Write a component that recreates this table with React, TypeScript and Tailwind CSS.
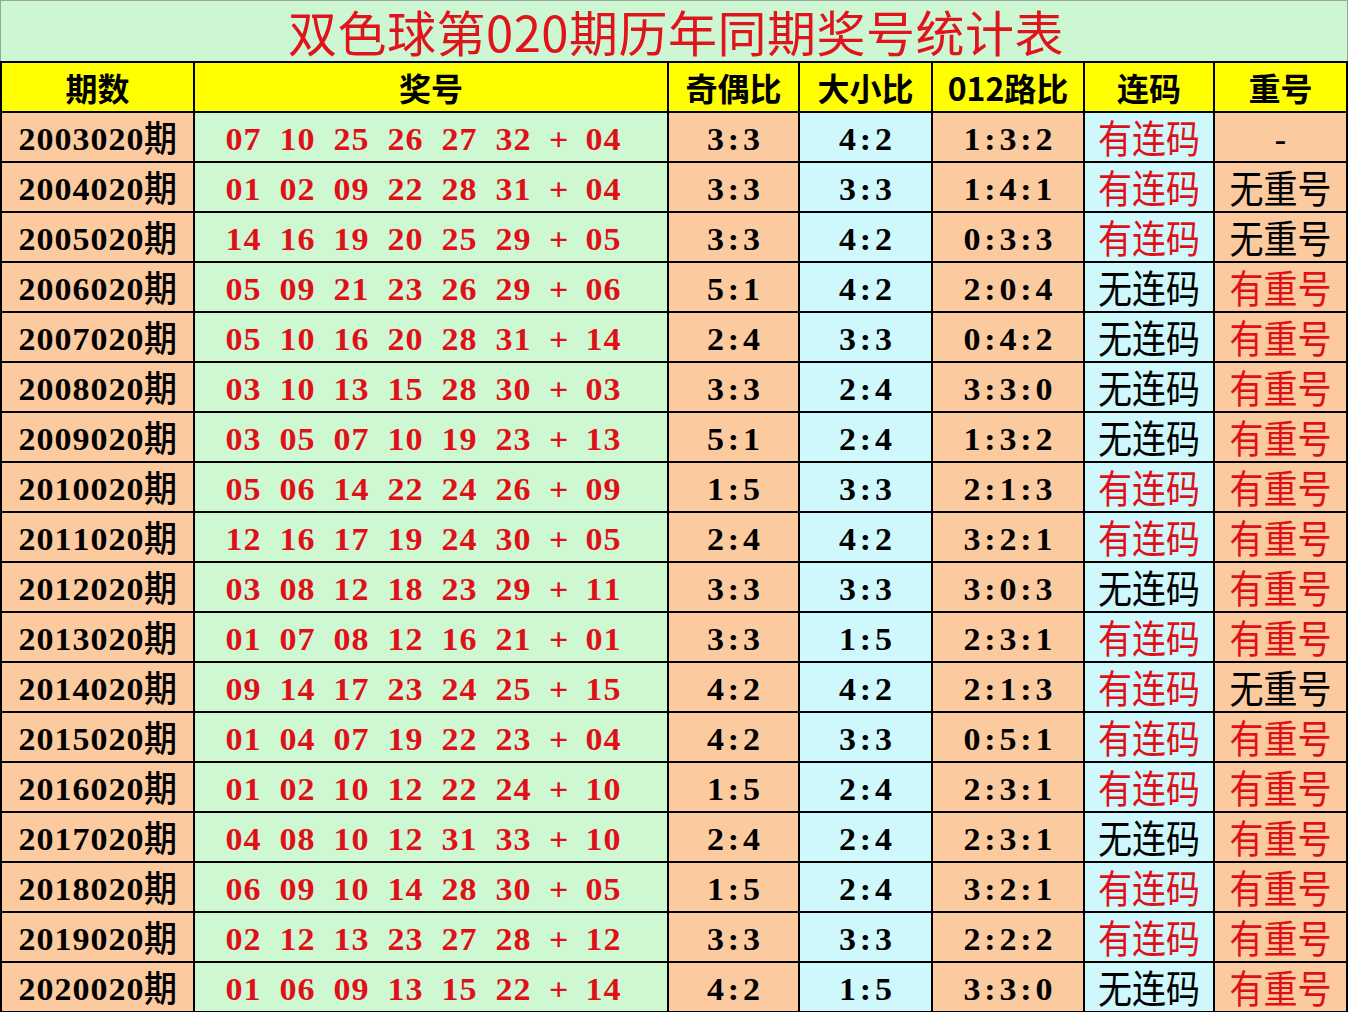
import React from 'react';

type Row = {
  period: string;
  nums: string;
  oddEven: string;
  bigSmall: string;
  road: string;
  hasLink: boolean;
  repeat: '-' | '有重号' | '无重号';
};

const ROWS: Row[] = [
  { period: '2003020', nums: '07 10 25 26 27 32 + 04', oddEven: '3:3', bigSmall: '4:2', road: '1:3:2', hasLink: true, repeat: '-' },
  { period: '2004020', nums: '01 02 09 22 28 31 + 04', oddEven: '3:3', bigSmall: '3:3', road: '1:4:1', hasLink: true, repeat: '无重号' },
  { period: '2005020', nums: '14 16 19 20 25 29 + 05', oddEven: '3:3', bigSmall: '4:2', road: '0:3:3', hasLink: true, repeat: '无重号' },
  { period: '2006020', nums: '05 09 21 23 26 29 + 06', oddEven: '5:1', bigSmall: '4:2', road: '2:0:4', hasLink: false, repeat: '有重号' },
  { period: '2007020', nums: '05 10 16 20 28 31 + 14', oddEven: '2:4', bigSmall: '3:3', road: '0:4:2', hasLink: false, repeat: '有重号' },
  { period: '2008020', nums: '03 10 13 15 28 30 + 03', oddEven: '3:3', bigSmall: '2:4', road: '3:3:0', hasLink: false, repeat: '有重号' },
  { period: '2009020', nums: '03 05 07 10 19 23 + 13', oddEven: '5:1', bigSmall: '2:4', road: '1:3:2', hasLink: false, repeat: '有重号' },
  { period: '2010020', nums: '05 06 14 22 24 26 + 09', oddEven: '1:5', bigSmall: '3:3', road: '2:1:3', hasLink: true, repeat: '有重号' },
  { period: '2011020', nums: '12 16 17 19 24 30 + 05', oddEven: '2:4', bigSmall: '4:2', road: '3:2:1', hasLink: true, repeat: '有重号' },
  { period: '2012020', nums: '03 08 12 18 23 29 + 11', oddEven: '3:3', bigSmall: '3:3', road: '3:0:3', hasLink: false, repeat: '有重号' },
  { period: '2013020', nums: '01 07 08 12 16 21 + 01', oddEven: '3:3', bigSmall: '1:5', road: '2:3:1', hasLink: true, repeat: '有重号' },
  { period: '2014020', nums: '09 14 17 23 24 25 + 15', oddEven: '4:2', bigSmall: '4:2', road: '2:1:3', hasLink: true, repeat: '无重号' },
  { period: '2015020', nums: '01 04 07 19 22 23 + 04', oddEven: '4:2', bigSmall: '3:3', road: '0:5:1', hasLink: true, repeat: '有重号' },
  { period: '2016020', nums: '01 02 10 12 22 24 + 10', oddEven: '1:5', bigSmall: '2:4', road: '2:3:1', hasLink: true, repeat: '有重号' },
  { period: '2017020', nums: '04 08 10 12 31 33 + 10', oddEven: '2:4', bigSmall: '2:4', road: '2:3:1', hasLink: false, repeat: '有重号' },
  { period: '2018020', nums: '06 09 10 14 28 30 + 05', oddEven: '1:5', bigSmall: '2:4', road: '3:2:1', hasLink: true, repeat: '有重号' },
  { period: '2019020', nums: '02 12 13 23 27 28 + 12', oddEven: '3:3', bigSmall: '3:3', road: '2:2:2', hasLink: true, repeat: '有重号' },
  { period: '2020020', nums: '01 06 09 13 15 22 + 14', oddEven: '4:2', bigSmall: '1:5', road: '3:3:0', hasLink: false, repeat: '有重号' },
];

const HEADERS = ['期数', '奖号', '奇偶比', '大小比', '012路比', '连码', '重号'];

const RED = 'text-[#e01018]';
const cell = 'flex items-center justify-center h-[48px] overflow-hidden';
const cjk = "inline-block scale-y-[1.15] font-['Noto_Sans_CJK_SC',sans-serif] text-[34px] leading-none";

// serif digits laid out on a fixed 18px pitch, like the half-width digits of the source sheet
const Glyphs: React.FC<{ text: string; className?: string }> = ({ text, className = '' }) => (
  <span className={`flex items-center leading-none pt-[5px] ${className}`}>
    {text.split('').map((ch, i) =>
      /[\u4e00-\u9fff]/.test(ch) ? (
        <span key={i} className="inline-block scale-y-[1.1] -translate-y-[2px] font-['Noto_Sans_CJK_SC',sans-serif] font-medium text-[33px]">{ch}</span>
      ) : (
        <span key={i} className="inline-block w-[18px] text-center font-['Liberation_Serif',serif] font-bold text-[34px] scale-y-[0.95]">
          {ch === ' ' ? '\u00a0' : ch}
        </span>
      )
    )}
  </span>
);

const App: React.FC = () => {
  return (
    <div className="w-[1348px] h-[1012px] overflow-hidden bg-black">
      {/* title band */}
      <div className="h-[61px] bg-[#cdf6d2] border-t border-l border-r border-[#9aa59c] flex items-center justify-center">
        <h1 className="font-['Noto_Sans_CJK_SC',sans-serif] text-[49px] tracking-[0.5px] leading-[56px] text-[#e0141c] pl-1">
          双色球第020期历年同期奖号统计表
        </h1>
      </div>

      <div className="grid grid-cols-[191px_472px_129px_131px_150px_128px_131px] gap-[2px] px-[2px] pt-[2px]">
        {HEADERS.map(h => (
          <div key={h} className={`${cell} bg-[#ffff00]`}>
            <span className="font-['Noto_Sans_CJK_SC',sans-serif] font-bold text-[32px] leading-none text-black">{h}</span>
          </div>
        ))}

        {ROWS.map(r => (
          <React.Fragment key={r.period}>
            <div className={`${cell} bg-[#fbca9e]`}>
              <Glyphs text={`${r.period}期`} className="text-black" />
            </div>
            <div className={`${cell} bg-[#cdf8d1] pr-4`}>
              <Glyphs text={r.nums} className={RED} />
            </div>
            <div className={`${cell} bg-[#fbca9e]`}>
              <Glyphs text={r.oddEven} className="text-black" />
            </div>
            <div className={`${cell} bg-[#cef8fc]`}>
              <Glyphs text={r.bigSmall} className="text-black" />
            </div>
            <div className={`${cell} bg-[#fbca9e]`}>
              <Glyphs text={r.road} className="text-black" />
            </div>
            <div className={`${cell} bg-[#cef8fc]`}>
              <span className={`${cjk} ${r.hasLink ? RED : 'text-black'}`}>
                {r.hasLink ? '有连码' : '无连码'}
              </span>
            </div>
            <div className={`${cell} bg-[#fbca9e]`}>
              {r.repeat === '-' ? (
                <Glyphs text="-" className="text-black" />
              ) : (
                <span className={`${cjk} ${r.repeat === '有重号' ? RED : 'text-black'}`}>{r.repeat}</span>
              )}
            </div>
          </React.Fragment>
        ))}
      </div>
    </div>
  );
};

export default App;
